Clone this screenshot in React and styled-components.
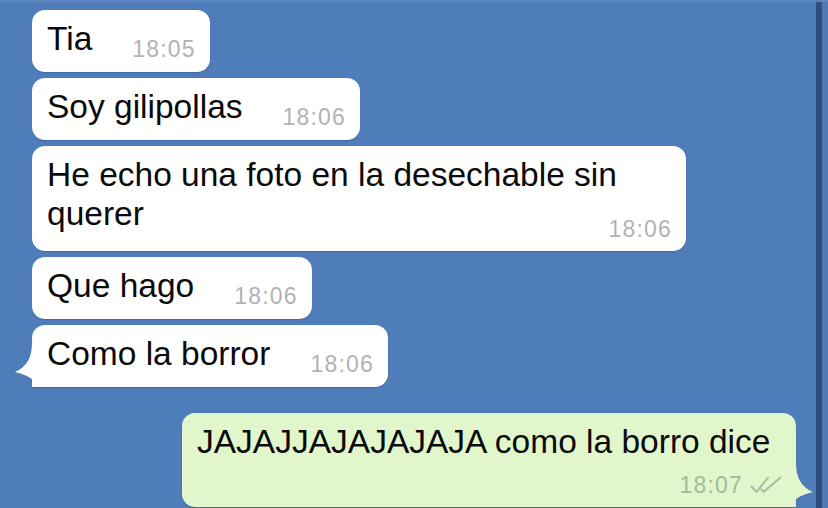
import React from "react"
import styled, { createGlobalStyle } from "styled-components"

const GlobalStyle = createGlobalStyle`
  html, body {
    margin: 0;
    padding: 0;
    background: #4f7db9;
    overflow: hidden;
  }
  body {
    font-family: "Liberation Sans", Arial, sans-serif;
  }
`

const Screen = styled.div`
  width: 828px;
  height: 508px;
  display: flex;
  background: #4f7db9;
  border-top: 2px solid #5a86c0;
  box-sizing: border-box;
  overflow: hidden;
`

const Chat = styled.div`
  flex: 1;
  display: flex;
  flex-direction: column;
  align-items: flex-start;
  gap: 6px;
  padding: 8px 0 0 32px;
`

const Divider = styled.div`
  width: 6px;
  background: #2f4e7f;
`

const Edge = styled.div`
  width: 6px;
  background: #4d79b4;
`

const Bubble = styled.div`
  position: relative;
  display: flex;
  flex-direction: ${(p) => (p.$wrap ? "column" : "row")};
  align-items: ${(p) => (p.$wrap ? "stretch" : "flex-end")};
  box-sizing: border-box;
  width: ${(p) => (p.$width ? `${p.$width}px` : "auto")};
  padding: 9px 14px 9px 15px;
  background: ${(p) => (p.$out ? "#e1f6cb" : "#ffffff")};
  border-radius: 13px;
  border-bottom-left-radius: ${(p) => (p.$tail === "left" ? "0" : "13px")};
  border-bottom-right-radius: ${(p) => (p.$tail === "right" ? "0" : "13px")};
  box-shadow: 0 1px 1px rgba(20, 40, 80, 0.22);
  align-self: ${(p) => (p.$out ? "flex-end" : "flex-start")};
  margin-right: ${(p) => (p.$out ? "20px" : "0")};
  margin-top: ${(p) => (p.$out ? "20px" : "0")};
`

const Text = styled.div`
  font-size: 33.5px;
  line-height: 39px;
  color: #0a0a0a;
  padding-bottom: ${(p) => (p.$wrap ? "0" : "5px")};
`

const Meta = styled.div`
  display: flex;
  align-items: center;
  gap: 7px;
  align-self: flex-end;
  font-size: 23px;
  line-height: 26px;
  letter-spacing: 1.2px;
  color: ${(p) => (p.$out ? "#a3bb9b" : "#b2b2b2")};
  margin-left: ${(p) => (p.$wrap ? "0" : "40px")};
  margin-bottom: ${(p) => (p.$wrap ? "0" : "1px")};
  margin-top: ${(p) => (p.$wrap ? (p.$out ? "11px" : "-17px") : "0")};
`

const Tail = styled.svg`
  position: absolute;
  bottom: 0;
  width: 30px;
  height: 44px;
  ${(p) => (p.$side === "left" ? "left: -18px;" : "right: -18px;")}
`

const Checks = () => (
  <svg width="32" height="18" viewBox="0 0 32 18" fill="none" stroke="#a7bea0" strokeWidth="2" strokeLinecap="round" strokeLinejoin="round">
    <path d="M1.5 10.5 L6.5 16 L18 1.5" />
    <path d="M11.5 13.5 L13.5 16 L30.5 1.5" />
  </svg>
)

const LeftTail = () => (
  <Tail $side="left" viewBox="0 0 30 44">
    <path d="M18 0 C18 14 13 24 1 29 C9 31 15 33 20 38 C23 41 26 44 30 44 L30 0 Z" fill="#ffffff" />
  </Tail>
)

const RightTail = () => (
  <Tail $side="right" viewBox="0 0 30 44">
    <path d="M12 0 C12 14 17 24 29 29 C21 31 15 33 10 38 C7 41 4 44 0 44 L0 0 Z" fill="#e1f6cb" />
  </Tail>
)

const messages = [
  { text: "Tia", time: "18:05" },
  { text: "Soy gilipollas", time: "18:06" },
  { text: "He echo una foto en la desechable sin querer", time: "18:06", wrap: true, width: 654 },
  { text: "Que hago", time: "18:06" },
  { text: "Como la borror", time: "18:06", tail: "left" },
  { text: "JAJAJJAJAJAJAJA como la borro dice", time: "18:07", wrap: true, out: true, tail: "right", width: 614 },
]

const Message = ({ text, time, wrap, width, out, tail }) => (
  <Bubble $wrap={wrap} $width={width} $out={out} $tail={tail}>
    {tail === "left" && <LeftTail />}
    {tail === "right" && <RightTail />}
    <Text $wrap={wrap}>{text}</Text>
    <Meta $wrap={wrap} $out={out}>
      {time}
      {out && <Checks />}
    </Meta>
  </Bubble>
)

const App = () => {
  return (
    <>
      <GlobalStyle />
      <Screen>
        <Chat>
          {messages.map((m, i) => (
            <Message key={i} {...m} />
          ))}
        </Chat>
        <Divider />
        <Edge />
      </Screen>
    </>
  )
}

export default App
